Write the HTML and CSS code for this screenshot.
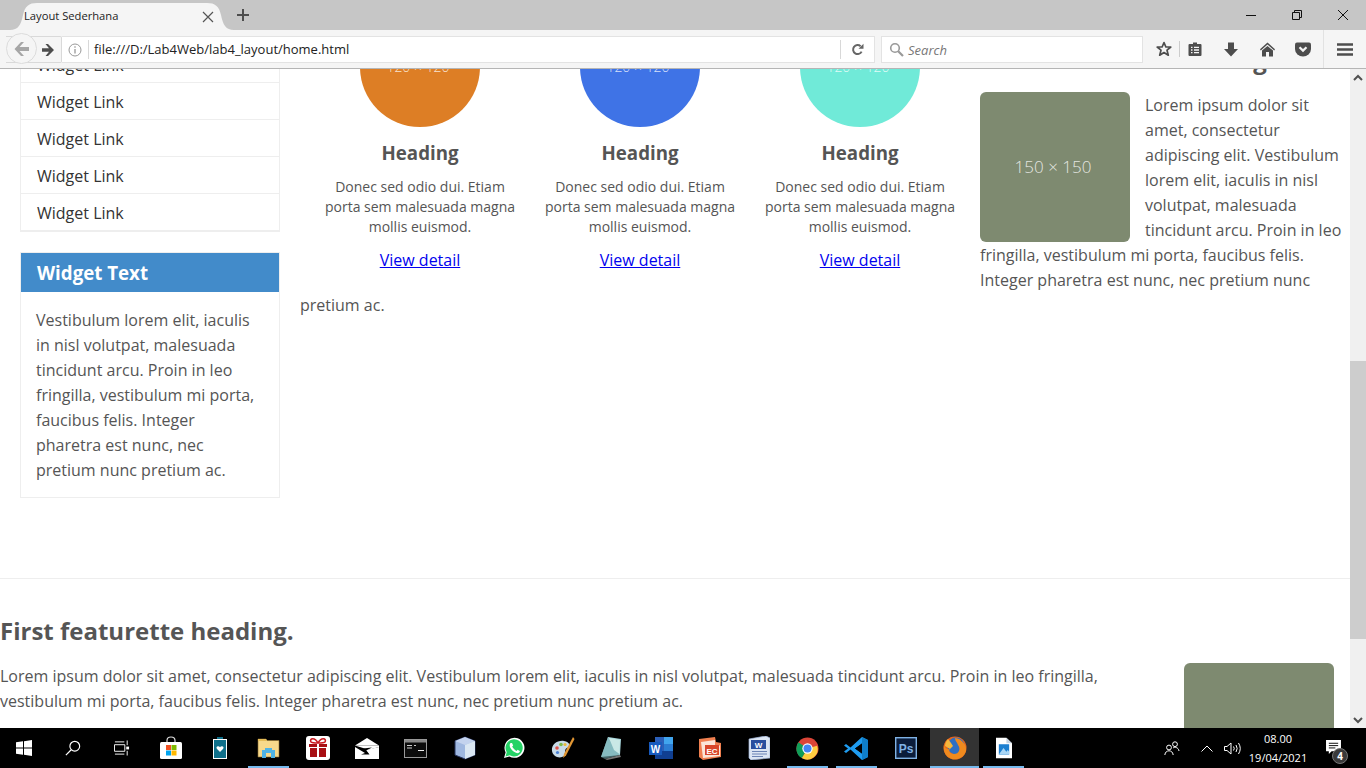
FILE: index.html
```html
<!DOCTYPE html>
<html lang="id">
<head>
<meta charset="utf-8">
<title>Layout Sederhana</title>
<link rel="stylesheet" href="styles.css">
</head>
<body>
<div class="screen">
  <header class="browser">
    <div class="titlebar">
      <div class="tab">
        <svg class="tab-shape" width="224" height="30" viewBox="0 0 224 30"><path d="M0 30C8 30 11 25 13 15C15 6 19 3 27 3H197C205 3 209 6 211 15C213 25 216 30 224 30Z" fill="#f5f5f5"/></svg>
        <span class="tab-title">Layout Sederhana</span>
        <svg class="tab-close" width="12" height="12" viewBox="0 0 12 12"><path d="M1 1L11 11M11 1L1 11" stroke="#555" stroke-width="1.2" fill="none"/></svg>
      </div>
      <svg class="tab-new" width="14" height="14" viewBox="0 0 14 14"><path d="M7 1V13M1 7H13" stroke="#4d4d4d" stroke-width="2" fill="none"/></svg>
      <div class="winctl">
        <span class="winbtn"><svg width="12" height="12" viewBox="0 0 12 12"><path d="M1 6.500H11" stroke="#111" fill="none"/></svg></span>
        <span class="winbtn"><svg width="12" height="12" viewBox="0 0 12 12"><path d="M1.500 3.500H8.500V10.500H1.500ZM3.500 3.500V1.500H10.500V8.500H8.500" stroke="#111" fill="none"/></svg></span>
        <span class="winbtn"><svg width="12" height="12" viewBox="0 0 12 12"><path d="M1 1L11 11M11 1L1 11" stroke="#111" fill="none"/></svg></span>
      </div>
    </div>
    <div class="navbar">
      <div class="histgroup">
        <span class="backbtn"><svg width="18" height="16" viewBox="0 0 18 16"><path d="M8 1L1.500 8L8 15H11L6.500 10H16V6H6.500L11 1Z" fill="#a6a6a6"/></svg></span>
        <span class="fwdbtn"><svg width="14" height="14" viewBox="0 0 14 14"><path d="M7 1L13 7L7 13H4.500L8 8.800H1V5.200H8L4.500 1Z" fill="#4d4d4d"/></svg></span>
      </div>
      <div class="urlbar">
        <svg class="info" width="14" height="14" viewBox="0 0 14 14"><circle cx="7" cy="7" r="6" fill="none" stroke="#999"/><path d="M7 6V10.500M7 3.300V4.800" stroke="#999" stroke-width="1.300" fill="none"/></svg>
        <span class="url">file:///D:/Lab4Web/lab4_layout/home.html</span>
        <span class="reload"><svg width="13" height="13" viewBox="0 0 13 13"><path d="M10.600 8.600A4.500 4.500 0 1 1 9.600 3.200" fill="none" stroke="#666" stroke-width="2"/><path d="M7.500 5.800H12.500V0.800Z" fill="#666"/></svg></span>
      </div>
      <div class="searchbar">
        <svg width="15" height="15" viewBox="0 0 15 15"><circle cx="6" cy="6" r="4.300" fill="none" stroke="#999" stroke-width="1.600"/><path d="M9.200 9.200L14 14" stroke="#999" stroke-width="2.200" fill="none"/></svg>
        <span class="search-text">Search</span>
      </div>
      <div class="tools">
        <span class="tool-star"><svg width="16" height="16" viewBox="0 0 16 16"><path d="M8 1.600L9.900 6H14.800L11 9.200L12.300 14.200L8 11.500L3.700 14.200L5 9.200L1.200 6H6.100Z" fill="none" stroke="#4d4d4d" stroke-width="1.700" stroke-linejoin="round"/></svg></span>
        <span class="tool-list"><svg width="14" height="16" viewBox="0 0 14 16"><path d="M5 1.500H9V3H12.500Q13.500 3 13.500 4V14Q13.500 15 12.500 15H1.500Q.5 15 .5 14V4Q.5 3 1.500 3H5Z" fill="#4d4d4d"/><path d="M3 6.300H4.500M6 6.300H11M3 9H4.500M6 9H11M3 11.700H4.500M6 11.700H11" stroke="#f5f5f5" stroke-width="1.300" fill="none"/></svg></span>
        <span class="tool tool-first"><svg width="14" height="15" viewBox="0 0 14 15"><path d="M4 .5H10V7H14L7 14.500L0 7H4Z" fill="#4d4d4d"/></svg></span>
        <span class="tool"><svg width="15" height="15" viewBox="0 0 15 15"><path d="M7.500 .5L15 7.300L14.200 8.400L7.500 2.600L.8 8.400L0 7.300Z" fill="#4d4d4d"/><path d="M7.500 4L13 8.600V14.500H9V10H6V14.500H2V8.600Z" fill="#4d4d4d"/></svg></span>
        <span class="tool"><svg width="16" height="15" viewBox="0 0 16 15"><path d="M2 .5H14Q16 .5 16 2.500V7A8 7.500 0 0 1 0 7V2.500Q0 .5 2 .5Z" fill="#4d4d4d"/><path d="M4.500 5.200L8 8.600L11.500 5.200" stroke="#f5f5f5" stroke-width="2.200" fill="none"/></svg></span>
        <span class="tool-sep"></span>
        <span class="tool-menu"><svg width="16" height="13" viewBox="0 0 16 13"><path d="M0 1.500H16M0 6.500H16M0 11.500H16" stroke="#4d4d4d" stroke-width="2.400" fill="none"/></svg></span>
      </div>
    </div>
  </header>

  <div class="viewport">
    <div class="page">
      <div class="page-inner">
        <div class="row">
          <aside class="sidebar">
            <ul class="links">
              <li>Widget Link</li>
              <li>Widget Link</li>
              <li>Widget Link</li>
              <li>Widget Link</li>
              <li>Widget Link</li>
              <li>Widget Link</li>
            </ul>
            <section class="widget">
              <h3 class="widget-title">Widget Text</h3>
              <p class="widget-body">Vestibulum lorem elit, iaculis in nisl volutpat, malesuada tincidunt arcu. Proin in leo fringilla, vestibulum mi porta, faucibus felis. Integer pharetra est nunc, nec pretium nunc pretium ac.</p>
            </section>
          </aside>
          <main class="main">
            <div class="cols">
              <div class="col">
                <div class="circle c-orange">120 × 120</div>
                <h4 class="col-title">Heading</h4>
                <p class="col-text">Donec sed odio dui. Etiam porta sem malesuada magna mollis euismod.</p>
                <a class="col-link" href="#">View detail</a>
              </div>
              <div class="col">
                <div class="circle c-blue">120 × 120</div>
                <h4 class="col-title">Heading</h4>
                <p class="col-text">Donec sed odio dui. Etiam porta sem malesuada magna mollis euismod.</p>
                <a class="col-link" href="#">View detail</a>
              </div>
              <div class="col">
                <div class="circle c-teal">120 × 120</div>
                <h4 class="col-title">Heading</h4>
                <p class="col-text">Donec sed odio dui. Etiam porta sem malesuada magna mollis euismod.</p>
                <a class="col-link" href="#">View detail</a>
              </div>
            </div>
            <h2 class="feat-title">First featurette heading.</h2>
            <div class="thumb thumb-left">150 × 150</div>
            <p class="feat-text">Lorem ipsum dolor sit amet, consectetur adipiscing elit. Vestibulum lorem elit, iaculis in nisl volutpat, malesuada tincidunt arcu. Proin in leo fringilla, vestibulum mi porta, faucibus felis. Integer pharetra est nunc, nec pretium nunc pretium ac.</p>
          </main>
        </div>
        <hr class="rule">
        <section class="featurette">
          <h2 class="feat-title feat-title-low">First featurette heading.</h2>
          <div class="thumb thumb-right">150 × 150</div>
          <p class="feat-text">Lorem ipsum dolor sit amet, consectetur adipiscing elit. Vestibulum lorem elit, iaculis in nisl volutpat, malesuada tincidunt arcu. Proin in leo fringilla, vestibulum mi porta, faucibus felis. Integer pharetra est nunc, nec pretium nunc pretium ac.</p>
        </section>
      </div>
    </div>
    <div class="scrollbar">
      <span class="sb-btn"><svg width="10" height="7" viewBox="0 0 10 7"><path d="M1 6L5 2L9 6" stroke="#505050" stroke-width="2" fill="none"/></svg></span>
      <div class="sb-track"><div class="sb-thumb"></div></div>
      <span class="sb-btn"><svg width="10" height="7" viewBox="0 0 10 7"><path d="M1 1L5 5L9 1" stroke="#505050" stroke-width="2" fill="none"/></svg></span>
    </div>
  </div>

  <footer class="taskbar">
    <span class="tb tb-start"><svg width="16" height="16" viewBox="0 0 16 16"><path d="M0 2.300L7 1.300V7.600H0ZM8 1.200L16 0V7.600H8ZM0 8.400H7V14.700L0 13.700ZM8 8.400H16V16L8 14.800Z" fill="#fff"/></svg></span>
    <span class="tb"><svg width="16" height="16" viewBox="0 0 18 18"><circle cx="11" cy="7" r="5.500" fill="none" stroke="#fff" stroke-width="1.300"/><path d="M7 11L1 17" stroke="#fff" stroke-width="1.400" fill="none"/></svg></span>
    <span class="tb"><svg width="16" height="16" viewBox="0 0 17 16"><path d="M.5 4.500H11.500V11.500H.5ZM1 1.500H11M1 14.500H11" stroke="#fff" fill="none"/><path d="M14 0V5M14 11V16" stroke="#fff" fill="none"/><rect x="13" y="6.500" width="3" height="3" fill="#fff"/></svg></span>
    <span class="tb"><svg width="24" height="24" viewBox="0 0 24 24"><path d="M8 7V4.500Q8 1 12 1T16 4.500V7" fill="none" stroke="#ddd" stroke-width="1.200"/><rect x="1" y="6" width="22" height="17" rx="1.500" fill="#fff"/><rect x="7" y="9" width="5" height="5" fill="#f25022"/><rect x="12.500" y="9" width="5" height="5" fill="#7fba00"/><rect x="7" y="14.500" width="5" height="5" fill="#00a4ef"/><rect x="12.500" y="14.500" width="5" height="5" fill="#ffb900"/></svg></span>
    <span class="tb"><svg width="16" height="24" viewBox="0 0 16 24"><rect x="5" y="1" width="6" height="3" fill="#0e6f8a"/><rect x="1.500" y="3.500" width="13" height="19" fill="#0e6f8a" stroke="#fff"/><path d="M8 16L4.800 12.800Q3.800 10.400 6 10.200Q7.400 10.200 8 11.300Q8.600 10.200 10 10.200Q12.200 10.400 11.200 12.800Z" fill="#fff"/></svg></span>
    <span class="tb tb-on"><svg width="23" height="22" viewBox="0 0 23 22"><path d="M1 2H9L10 3.500H22V20H1Z" fill="#f7d98b" stroke="#8a6d2f" stroke-width=".6"/><path d="M1 2H9L10 4H1Z" fill="#e6bd58"/><path d="M5 13H8V11H15V13H18V21H14V16H9V21H5Z" fill="#4fb4e6"/></svg></span>
    <span class="tb"><svg width="24" height="24" viewBox="0 0 24 24"><rect width="24" height="24" rx="3" fill="#fff"/><path d="M3 8H21V11H3ZM4 12H20V21H4Z" fill="#a80f14"/><path d="M11 7H13V21H11Z" fill="#fff"/><path d="M12 7C9 1 3 2 5 6Q6 7 12 7C15 1 21 2 19 6Q18 7 12 7" fill="none" stroke="#c91a20" stroke-width="1.600"/></svg></span>
    <span class="tb"><svg width="24" height="21" viewBox="0 0 24 21"><path d="M12 0L24 7.500H0Z" fill="#fff"/><path d="M0 9L10 15L6 16.500H14.500L11 12L24 9V21H0Z" fill="#fff"/><path d="M0 7.500H24V9L13 12L8 10Z" fill="#fff"/><path d="M8 10.500L17 9.500L11 12.500L14 16Z" fill="#000"/></svg></span>
    <span class="tb"><svg width="23" height="19" viewBox="0 0 23 19"><rect x=".5" y=".5" width="22" height="18" fill="#0c0c0c" stroke="#999"/><rect x="1" y="1" width="21" height="2.500" fill="#888"/><path d="M3 6.500H8M10 6.500H12M3 9H8" stroke="#ccc" fill="none"/><path d="M14 11.500H20" stroke="#eee" fill="none"/></svg></span>
    <span class="tb"><svg width="22" height="24" viewBox="0 0 22 24"><path d="M11 1L21 5V19L11 23L1 19V5Z" fill="#9fb8e0" stroke="#27345f"/><path d="M11 1L21 5L11 9L1 5Z" fill="#c3d3ee"/><path d="M11 9L21 5V19L11 23Z" fill="#dbe8f3"/></svg></span>
    <span class="tb"><svg width="22" height="22" viewBox="0 0 22 22"><path d="M1 21L2.600 15.400A10 10 0 1 1 6.400 19.400Z" fill="#fff"/><path d="M2.500 19.500L3.700 15.200A8.600 8.600 0 1 1 6.800 18.300Z" fill="#25d366"/><path d="M7.500 6C6 7.600 6.500 10 8.500 12.600S13.500 16.600 15.400 16C16.600 15.600 17 14.600 16.800 14L14.600 12.800L13.600 14C12 13.400 9.800 11.200 9.200 9.600L10.200 8.400L9 6Z" fill="#fff"/></svg></span>
    <span class="tb"><svg width="24" height="24" viewBox="0 0 24 24"><path d="M1 15C0 8 7 4 13 5C19 6 20 10 16 12C13 13 15 17 13 20C9 23 2 21 1 15Z" fill="#c8dbe8"/><circle cx="6" cy="12" r="1.800" fill="#e0524a"/><circle cx="10" cy="8.500" r="1.800" fill="#7cb94a"/><circle cx="14" cy="8.500" r="1.600" fill="#e8b93a"/><circle cx="6.500" cy="16.500" r="1.600" fill="#4a80d4"/><path d="M22 1L13 18L12 22L15 19.500L23.500 3Z" fill="#e19633"/></svg></span>
    <span class="tb"><svg width="23" height="24" viewBox="0 0 23 24"><path d="M8 1L21 3L20 19L1 21Z" fill="#a8d6dc"/><path d="M8 1L1 21L5 23L20 19Z" fill="#6fa9ad" opacity=".6"/><path d="M9 2L20 4L19.500 18L14 14Z" fill="#c9e8e6"/><path d="M5 23L20 19L21 21L7 24Z" fill="#777"/></svg></span>
    <span class="tb"><svg width="24" height="24" viewBox="0 0 24 24"><rect x="6" y="1" width="18" height="22" fill="#2b5fb8"/><rect x="15" y="1" width="9" height="7" fill="#41a5ee"/><rect x="15" y="8" width="9" height="7" fill="#2b7cd3"/><rect x="6" y="15" width="18" height="8" fill="#103f91"/><rect x="0" y="6" width="13" height="13" fill="#185abd"/><text class="t-w" x="6.500" y="16.500">W</text></svg></span>
    <span class="tb"><svg width="24" height="23" viewBox="0 0 24 23"><path d="M1 2L17 0L18 5L23 6V20L5 23L1 20Z" fill="#f08050"/><path d="M3 5L17 3V8L22 8.500V19L5 21Z" fill="#fbe6d8"/><rect x="7" y="8" width="14" height="10" fill="#d9482b"/><text class="t-p" x="14" y="16.500">EC</text></svg></span>
    <span class="tb"><svg width="22" height="24" viewBox="0 0 22 24"><path d="M1 3L18 0L22 2V22L3 24L1 22Z" fill="#dbe5f3" stroke="#9fb3d6" stroke-width=".7"/><rect x="3" y="4" width="15" height="9" fill="#2a4f9e"/><text class="t-w2" x="10.500" y="12">W</text><path d="M4 15.500H19M4 18H19M4 20.500H15" stroke="#6c84b5" fill="none"/></svg></span>
    <span class="tb tb-on"><svg width="23" height="23" viewBox="0 0 24 24"><circle cx="12" cy="12" r="11.500" fill="#db4437"/><path d="M12 12L22 9A11 11 0 0 1 6 22Z" fill="#ffcd40"/><path d="M12 12L6 22A11.500 11.500 0 0 1 2.500 5.500Z" fill="#0f9d58"/><circle cx="12" cy="12" r="5.400" fill="#fff"/><circle cx="12" cy="12" r="4.200" fill="#4285f4"/></svg></span>
    <span class="tb tb-on"><svg width="25" height="25" viewBox="0 0 25 25"><path d="M18 1L24 4V21L18 24L6.500 13.500L2 17L0 15.500L4 12.500L0 9.500L2 8L6.500 11.500ZM18 7.500L11 12.500L18 17.500Z" fill="#1f9cf0" fill-rule="evenodd"/><path d="M18 1L24 4V21L18 24Z" fill="#0f7ec9"/><path d="M18 7.500V17.500L11 12.500Z" fill="#000"/></svg></span>
    <span class="tb"><svg width="22" height="22" viewBox="0 0 22 22"><rect x=".7" y=".7" width="20.600" height="20.600" fill="#0b1d3b" stroke="#7fb2e5" stroke-width="1.400"/><text class="t-ps" x="11" y="16">Ps</text></svg></span>
    <span class="tb tb-on tb-active"><svg width="24" height="24" viewBox="0 0 24 24"><circle cx="12" cy="12" r="11.500" fill="#e8661c"/><circle cx="13" cy="10" r="8.500" fill="#2f6fc4"/><path d="M12 2C19 3 24 9 23 15C21 22 14 24 9 23C3 21 0 16 1 9C2 13 5 14 7 13C5 15 7 18 11 18C16 18 18 13 15 9C14 6 12 5 12 2Z" fill="#f08a1e"/><path d="M5 3C3 5 2 8 2 10L7 13L10 10L8 7Z" fill="#f6b73c"/></svg></span>
    <span class="tb tb-on"><svg width="16" height="22" viewBox="0 0 17 22"><path d="M0 0H11L17 6V22H0Z" fill="#fff"/><path d="M11 0L17 6H11Z" fill="#c7d4e2"/><rect x="3" y="7" width="11" height="11" fill="#1c7fd0"/><path d="M3 18L8 11L11 15L12.500 13L14 15V18Z" fill="#a9d6f5"/></svg></span>
    <div class="tray">
      <span class="tray-item tray-people"><svg width="16" height="15" viewBox="0 0 16 15"><circle cx="5" cy="6.500" r="2.400" fill="none" stroke="#fff"/><path d="M.8 14C1.200 11 3 9.800 5 9.800S8.800 11 9.200 14" stroke="#fff" fill="none"/><circle cx="11" cy="3.200" r="2.400" fill="none" stroke="#fff"/><path d="M9 7C10.500 5.700 14.500 6.200 15 10" stroke="#fff" fill="none"/></svg></span>
      <span class="tray-item tray-chev"><svg width="12" height="7" viewBox="0 0 12 7"><path d="M.5 6.500L6 1L11.500 6.500" stroke="#fff" fill="none"/></svg></span>
      <span class="tray-item tray-vol"><svg width="17" height="13" viewBox="0 0 17 13"><path d="M.5 4.500H3L7 1V12L3 8.500H.5Z" stroke="#fff" fill="none"/><path d="M9.500 4.500Q11 6.500 9.500 8.500M12 3Q14.300 6.500 12 10M14.500 1Q18 6.500 14.500 12" stroke="#fff" fill="none"/></svg></span>
      <div class="clock"><span>08.00</span><span>19/04/2021</span></div>
      <span class="tray-item tray-note">
        <svg width="17" height="14" viewBox="0 0 16 15"><path d="M0 0H16V12H6L3 15V12H0Z" fill="#fff"/><path d="M3 3.500H13M3 6H13M3 8.500H10" stroke="#000" fill="none"/></svg>
        <span class="badge">4</span>
      </span>
    </div>
  </footer>
</div>
</body>
</html>
```

FILE: styles.css
```css
* { box-sizing: border-box; }
html, body { margin: 0; padding: 0; height: 100%; overflow: hidden; }
body { font-family: "Open Sans", "Liberation Sans", sans-serif; font-size: 16px; color: #555; background: #fff; }
.screen { width: 1366px; height: 768px; display: flex; flex-direction: column; overflow: hidden; }

/* browser chrome */
.browser { flex: none; height: 69px; background: #f5f5f5; border-bottom: 1px solid #b5b5b5; }
.titlebar { height: 30px; background: #c6c6c6; display: flex; align-items: center; padding-left: 10px; }
.tab { position: relative; width: 224px; height: 30px; display: flex; align-items: center; padding: 2px 20px 0 14px; margin-right: 2px; }
.tab-shape { position: absolute; left: 0; top: 0; }
.tab-title { position: relative; top: -1px; font-size: 11.2px; color: #222; flex: 1; }
.tab-close { position: relative; margin-top: 1px; }
.winctl { margin-left: auto; display: flex; }
.winbtn { width: 46px; height: 30px; display: flex; align-items: center; justify-content: center; }
.navbar { height: 38px; display: flex; align-items: center; padding-left: 6px; position: relative; }
.histgroup { width: 56px; height: 27px; display: flex; align-items: center; position: relative; background: #f5f5f5; border: 1px solid #d9d9d9; border-left: 0; border-radius: 0 2px 2px 0; margin-top: 1px; }
.backbtn { position: absolute; left: 0; top: -4px; width: 31px; height: 31px; border-radius: 50%; background: #f5f5f5; border: 1px solid #dcdcdc; display: flex; align-items: center; justify-content: center; }
.fwdbtn { margin-left: 35px; display: flex; }
.urlbar { width: 813px; height: 27px; margin-top: 1px; background: #fff; border: 1px solid #e3e3e3; border-left: 0; display: flex; align-items: center; padding-left: 6px; }
.info { flex: none; }
.url { margin-left: 6px; padding-left: 5px; border-left: 1px solid #d8d8d8; font-size: 13px; line-height: 19px; color: #222; flex: 1; }
.reload { width: 34px; height: 19px; border-left: 1px solid #d8d8d8; display: flex; align-items: center; justify-content: center; }
.searchbar { width: 262px; height: 27px; margin: 1px 0 0 6px; background: #fff; border: 1px solid #e3e3e3; display: flex; align-items: center; padding-left: 7px; gap: 4px; }
.search-text { font-size: 13px; font-style: italic; color: #777; }
.tools { display: flex; align-items: center; margin-left: 9px; height: 100%; }
.tool { width: 36px; display: flex; align-items: center; justify-content: center; }
.tool-first { margin-left: 3px; }
.tool-star { width: 28px; height: 16px; padding-right: 3px; border-right: 1px solid #ccc; display: flex; align-items: center; justify-content: center; }
.tool-list { width: 30px; display: flex; align-items: center; justify-content: center; }
.tool-sep { width: 1px; height: 38px; background: #e2e2e2; margin-left: 2px; }
.tool-menu { width: 42px; display: flex; align-items: center; justify-content: center; }

/* page */
.viewport { flex: 1; min-height: 0; display: flex; }
.page { width: 1350px; overflow: hidden; background: #fff; }
.page-inner { margin-top: -62px; }
.row { display: flex; gap: 20px; padding-left: 20px; }
.sidebar { flex: none; width: 260px; padding-top: 2px; }
.links { list-style: none; margin: 0; padding: 0; border: 1px solid #eee; border-top: 0; border-bottom-width: 2px; }
.links li { height: 37px; line-height: 38px; padding-left: 16px; color: #333; border-bottom: 1px solid #eee; }
.links li:last-child { border-bottom: 0; height: 36px; }
.widget { margin-top: 20px; border: 1px solid #eee; }
.widget-title { margin: 0; height: 39px; line-height: 39px; padding-left: 16px; background: #428bca; color: #fff; font-size: 18.72px; font-weight: 700; }
.widget-body { margin: 0; padding: 16px 15px 14px; line-height: 25px; }
.main { flex: 1; min-width: 0; padding-right: 8px; }
.cols { float: left; width: 680px; display: flex; gap: 20px; padding-left: 20px; }
.col { width: 200px; text-align: center; }
.circle { width: 120px; height: 120px; margin: 0 auto; padding-right: 4px; border-radius: 50%; color: rgba(255,255,255,.8); font-size: 14px; font-weight: 300; line-height: 120px; }
.c-orange { background: #dd7e25; }
.c-blue { background: #3f73e6; }
.c-teal { background: #70ead8; }
.col-title { margin: 10px 0 0; font-size: 18.72px; line-height: 32px; font-weight: 700; color: #555; }
.col-text { margin: 8px 0 0; font-size: 14px; line-height: 20px; }
.col-link { display: block; margin-top: 11px; font-size: 16px; line-height: 25px; color: #00e; text-decoration: underline; }
.feat-title { margin: 36px 0 16px; font-size: 24px; line-height: 33px; font-weight: 700; color: #555; }
.feat-title-low { margin-top: 35px; }
.feat-text { margin: 0; padding-top: 1px; line-height: 25px; }
.thumb { width: 150px; height: 150px; padding-right: 4px; background: #7e8a70; color: rgba(255,255,255,.8); font-size: 17px; font-weight: 300; text-align: center; line-height: 150px; border-radius: 6px; }
.thumb-left { float: left; margin-right: 15px; }
.thumb-right { float: right; margin: 0 16px 0 60px; }
.rule { margin: 80px 0 0; border: 0; border-top: 1px solid #eee; }

/* scrollbar */
.scrollbar { width: 16px; background: #f0f0f0; display: flex; flex-direction: column; }
.sb-btn { height: 16px; flex: none; display: flex; align-items: center; justify-content: center; }
.sb-track { flex: 1; padding-top: 276px; }
.sb-thumb { height: 278px; background: #cdcdcd; }

/* taskbar */
.taskbar { flex: none; height: 40px; background: #000; display: flex; }
.tb { width: 49px; height: 40px; display: flex; align-items: center; justify-content: center; position: relative; }
.tb-start { width: 48px; }
.tb-on::after { content: ""; position: absolute; left: 4px; right: 4px; bottom: 0; height: 2px; background: #76b9ed; }
.tb-active { background: #333; }
.tb-active::after { left: 0; right: 0; }
.t-w, .t-p, .t-w2, .t-ps { font-family: "Liberation Sans", sans-serif; font-weight: 700; text-anchor: middle; }
.t-w { font-size: 10px; fill: #fff; }
.t-p { font-size: 8px; fill: #fff; }
.t-w2 { font-size: 8px; fill: #fff; }
.t-ps { font-size: 12px; fill: #7fb2e5; }
.tray { margin-left: auto; display: flex; align-items: center; height: 40px; color: #fff; }
.tray-item { display: flex; align-items: center; justify-content: center; position: relative; }
.tray-people { width: 34px; margin-right: 10px; }
.tray-chev { width: 16px; margin-right: 7px; }
.tray-vol { width: 20px; margin-right: 6px; }
.clock { width: 60px; display: flex; flex-direction: column; align-items: center; font-size: 11px; line-height: 19px; margin-right: 17px; }
.tray-note { width: 17px; margin-right: 24px; margin-bottom: 2px; }
.badge { position: absolute; left: 7px; top: 8px; width: 16px; height: 16px; border-radius: 50%; background: #3a3a3a; border: 1px solid #777; color: #fff; font-size: 10px; font-weight: 700; line-height: 14px; text-align: center; }
```
